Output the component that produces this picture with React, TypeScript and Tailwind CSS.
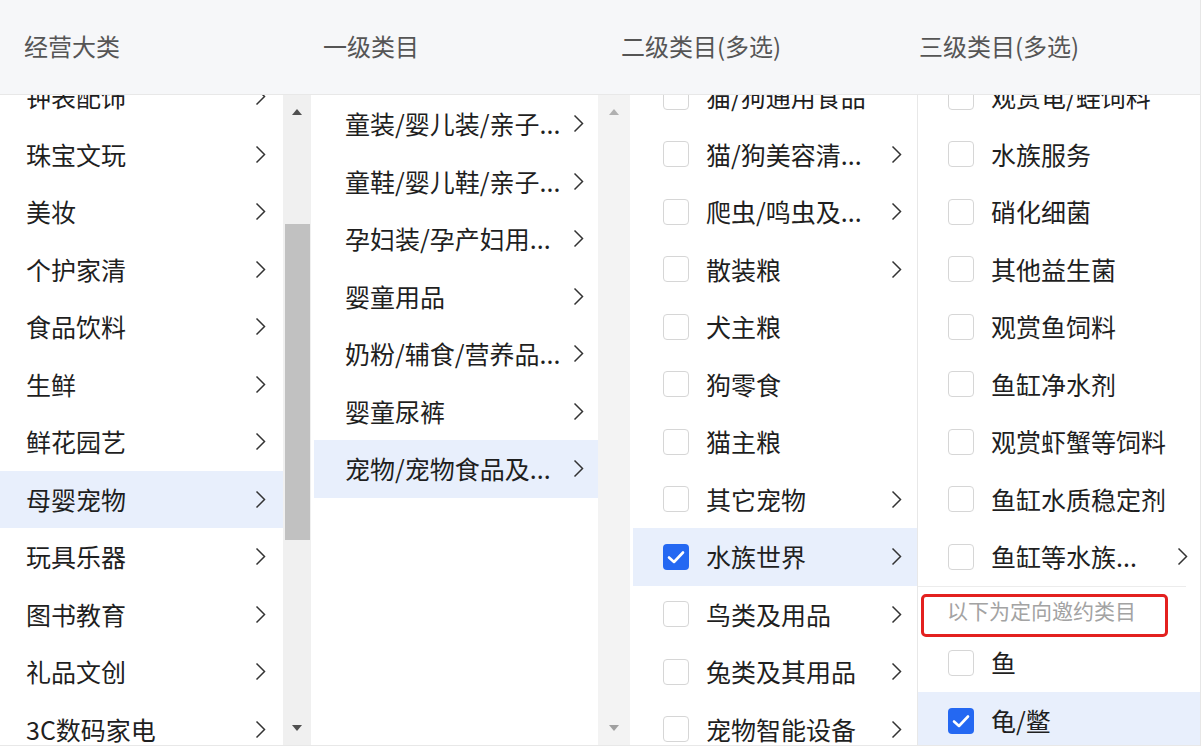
import React from "react";

const Chevron = () => (
  <svg width="11" height="19" viewBox="0 0 11 19" className="shrink-0">
    <path d="M1.5 1.5 L9.5 9.5 L1.5 17.5" fill="none" stroke="#333" strokeWidth="1.5" />
  </svg>
);

const Checkbox = ({ checked }: { checked?: boolean }) =>
  checked ? (
    <div className="flex h-[26px] w-[26px] shrink-0 items-center justify-center rounded-[4px] bg-[#2468f2]">
      <svg width="26" height="26" viewBox="0 0 26 26">
        <path d="M6 13.5 L11 18 L20 8.5" fill="none" stroke="#fff" strokeWidth="2.6" strokeLinecap="round" strokeLinejoin="round" />
      </svg>
    </div>
  ) : (
    <div className="h-[26px] w-[26px] shrink-0 rounded-[4px] border border-[#d6d6d6] bg-white" />
  );

const UpArrow = ({ color }: { color: string }) => (
  <svg width="10" height="6" viewBox="0 0 10 6">
    <path d="M0 6 L5 0 L10 6 Z" fill={color} />
  </svg>
);
const DownArrow = ({ color }: { color: string }) => (
  <svg width="10" height="6" viewBox="0 0 10 6">
    <path d="M0 0 L5 6 L10 0 Z" fill={color} />
  </svg>
);

const col1 = [
  "钟表配饰",
  "珠宝文玩",
  "美妆",
  "个护家清",
  "食品饮料",
  "生鲜",
  "鲜花园艺",
  "母婴宠物",
  "玩具乐器",
  "图书教育",
  "礼品文创",
  "3C数码家电",
];

const col2 = [
  "童装/婴儿装/亲子...",
  "童鞋/婴儿鞋/亲子...",
  "孕妇装/孕产妇用...",
  "婴童用品",
  "奶粉/辅食/营养品...",
  "婴童尿裤",
  "宠物/宠物食品及...",
];

const col3: { t: string; c: boolean }[] = [
  { t: "猫/狗通用食品", c: false },
  { t: "猫/狗美容清...", c: true },
  { t: "爬虫/鸣虫及...", c: true },
  { t: "散装粮", c: true },
  { t: "犬主粮", c: false },
  { t: "狗零食", c: false },
  { t: "猫主粮", c: false },
  { t: "其它宠物", c: true },
  { t: "水族世界", c: true },
  { t: "鸟类及用品", c: true },
  { t: "兔类及其用品", c: true },
  { t: "宠物智能设备", c: true },
];

const col4: { t: string; c: boolean }[] = [
  { t: "观赏龟/蛙饲料", c: false },
  { t: "水族服务", c: false },
  { t: "硝化细菌", c: false },
  { t: "其他益生菌", c: false },
  { t: "观赏鱼饲料", c: false },
  { t: "鱼缸净水剂", c: false },
  { t: "观赏虾蟹等饲料", c: false },
  { t: "鱼缸水质稳定剂", c: false },
  { t: "鱼缸等水族...", c: true },
];

export default function App() {
  return (
    <div className="h-[752px] w-[1204px] overflow-hidden bg-white font-['Noto_Sans_CJK_SC','Microsoft_YaHei',sans-serif] text-[#1f1f1f]">
      <div className="w-[1201px] border-r border-[#e6e6e6]">
        {/* header */}
        <div className="flex h-[95px] items-center border-b border-[#e8e8e8] bg-[#f6f7f9] pb-[2px] text-[24px] leading-none text-[#555]">
          <div className="w-[298px] pl-[24px]">经营大类</div>
          <div className="w-[299px] pl-[25px]">一级类目</div>
          <div className="w-[298px] pl-[24px]">二级类目(多选)</div>
          <div className="flex-1 pl-[24px]">三级类目(多选)</div>
        </div>

        {/* body */}
        <div className="flex h-[651px] border-b border-[#e8e8e8] text-[25px] leading-none">
          {/* col 1 */}
          <div className="flex w-[314px] pr-[3px]">
            <div className="w-[283px] overflow-hidden">
              <div className="-mt-[27px]">
                {col1.map((t) => (
                  <div
                    key={t}
                    className={`flex h-[57.5px] items-center justify-between pl-[26px] pr-[17px] ${
                      t === "母婴宠物" ? "bg-[#e8effc]" : ""
                    }`}
                  >
                    <span>{t}</span>
                    <Chevron />
                  </div>
                ))}
              </div>
            </div>
            <div className="flex w-[28px] flex-col items-center bg-[#f0f0f0]">
              <div className="flex h-[34px] items-center justify-center">
                <UpArrow color="#505050" />
              </div>
              <div className="mt-[95px] h-[316px] w-[25px] bg-[#c1c1c1]" />
              <div className="flex-1" />
              <div className="flex h-[34px] items-center justify-center">
                <DownArrow color="#505050" />
              </div>
            </div>
          </div>

          {/* col 2 */}
          <div className="flex w-[319px] pr-[3px]">
            <div className="w-[284px] overflow-hidden">
              {col2.map((t) => (
                <div
                  key={t}
                  className={`flex h-[57.5px] items-center justify-between pl-[31px] pr-[14px] ${
                    t.startsWith("宠物/") ? "bg-[#e8effc]" : ""
                  }`}
                >
                  <span>{t}</span>
                  <Chevron />
                </div>
              ))}
            </div>
            <div className="flex w-[32px] flex-col items-center bg-[#f3f3f3]">
              <div className="flex h-[34px] items-center justify-center">
                <UpArrow color="#b0b0b0" />
              </div>
              <div className="flex-1" />
              <div className="flex h-[34px] items-center justify-center">
                <DownArrow color="#a0a0a0" />
              </div>
            </div>
          </div>

          {/* col 3 */}
          <div className="w-[285px] overflow-hidden border-r border-[#e8e8e8]">
            <div className="-mt-[27px]">
              {col3.map((r) => (
                <div
                  key={r.t}
                  className={`flex h-[57.5px] items-center pl-[30px] pr-[15px] ${
                    r.t === "水族世界" ? "bg-[#e8effc]" : ""
                  }`}
                >
                  <Checkbox checked={r.t === "水族世界"} />
                  <span className="ml-[17px]">{r.t}</span>
                  <div className="ml-auto">{r.c ? <Chevron /> : null}</div>
                </div>
              ))}
            </div>
          </div>

          {/* col 4 */}
          <div className="flex-1 overflow-hidden">
            <div className="-mt-[27px]">
              {col4.map((r) => (
                <div key={r.t} className="flex h-[57.5px] items-center pl-[30px] pr-[12px]">
                  <Checkbox />
                  <span className="ml-[17px]">{r.t}</span>
                  <div className="ml-auto">{r.c ? <Chevron /> : null}</div>
                </div>
              ))}
              <div className="relative mr-[14px] h-[48px] border-t border-[#ececec]">
                <div className="flex h-full items-center pl-[29px] text-[21px] text-[#a3a3a3]">
                  以下为定向邀约类目
                </div>
                <div className="absolute left-[3px] top-[7px] h-[43px] w-[247px] rounded-[5px] border-[3.5px] border-[#e3201f]" />
              </div>
              <div className="flex h-[58px] items-center pl-[30px]">
                <Checkbox />
                <span className="ml-[17px]">鱼</span>
              </div>
              <div className="flex h-[58px] items-center bg-[#e8effc] pl-[30px]">
                <Checkbox checked />
                <span className="ml-[17px]">龟/鳖</span>
              </div>
            </div>
          </div>
        </div>
      </div>
    </div>
  );
}
